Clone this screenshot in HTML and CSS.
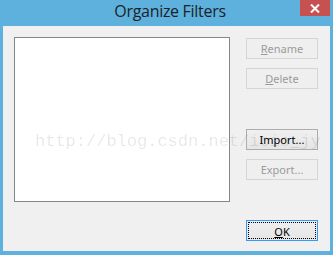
FILE: index.html
```html
<!DOCTYPE html>
<html lang="en">
<head>
    <meta charset="UTF-8">
    <title>Organize Filters</title>
    <link rel="stylesheet" href="styles.css">
</head>
<body>
    <div class="window">
        <div class="titlebar">
            <span></span>
            <span class="title">Organize Filters</span>
            <button class="close" title="Close">
                <svg width="10" height="9" viewBox="0 0 10 9">
                    <path d="M1 0.5 L9 8.5 M9 0.5 L1 8.5" stroke="#fff" stroke-width="2"/>
                </svg>
            </button>
        </div>
        <div class="client">
            <div class="list"></div>
            <div class="actions">
                <button class="btn" disabled><u>R</u>ename</button>
                <button class="btn" disabled><u>D</u>elete</button>
                <button class="btn import">Import...</button>
                <button class="btn" disabled>Export...</button>
                <button class="btn ok"><span class="focus"><u>O</u>K</span></button>
            </div>
            <div class="watermark">http://blog.csdn.net/icio_jy</div>
        </div>
    </div>
</body>
</html>
```

FILE: styles.css
```css
body {
    margin: 0;
    background-color: #5eb1dc;
    font-family: "Noto Sans", "Open Sans", sans-serif;
}

.window {
    width: 333px;
    height: 255px;
    background-color: #5eb1dc;
    padding: 0 3px 4px 3px;
    box-sizing: border-box;
    display: flex;
    flex-direction: column;
}

.titlebar {
    height: 26px;
    display: grid;
    grid-template-columns: 1fr auto 1fr;
    align-items: start;
}

.title {
    padding-left: 7px;
    font-family: "Open Sans", sans-serif;
    font-size: 16px;
    line-height: 22px;
    color: #1b1f2a;
    letter-spacing: -0.3px;
}

.close {
    justify-self: end;
    width: 30px;
    height: 16px;
    border: none;
    padding: 0;
    background-color: #c75050;
    display: flex;
    align-items: center;
    justify-content: center;
}

.client {
    position: relative;
    flex: 1;
    background-color: #f0f0f0;
    display: flex;
    padding: 11px 0 0 11px;
    gap: 16px;
}

.list {
    width: 216px;
    height: 165px;
    background-color: #fff;
    border: 1px solid #828790;
    box-sizing: border-box;
}

.actions {
    display: flex;
    flex-direction: column;
    padding-top: 1px;
}

.btn {
    width: 72px;
    height: 21px;
    margin-bottom: 9px;
    padding: 0;
    border: 1px solid #d5d5d5;
    background-color: #efefef;
    color: #9b9b9b;
    font-family: "Noto Sans", sans-serif;
    font-size: 11px;
    line-height: 17px;
    box-sizing: border-box;
}

.btn.import {
    margin-top: 31px;
    border-color: #adadad;
    background: linear-gradient(#f0f0f0, #e5e5e5);
    color: #000;
}

.btn.ok {
    margin-top: 31px;
    border-color: #3399ff;
    background: linear-gradient(#eeeeee, #e6e6e6);
    color: #000;
    padding: 1px;
}

.focus {
    display: block;
    height: 100%;
    border: 1px dotted #000;
    box-sizing: border-box;
}

.watermark {
    position: absolute;
    left: 32px;
    top: 106px;
    font-family: "Liberation Mono", monospace;
    font-size: 17px;
    color: rgba(0, 0, 0, 0.1);
    pointer-events: none;
    white-space: nowrap;
}
```
